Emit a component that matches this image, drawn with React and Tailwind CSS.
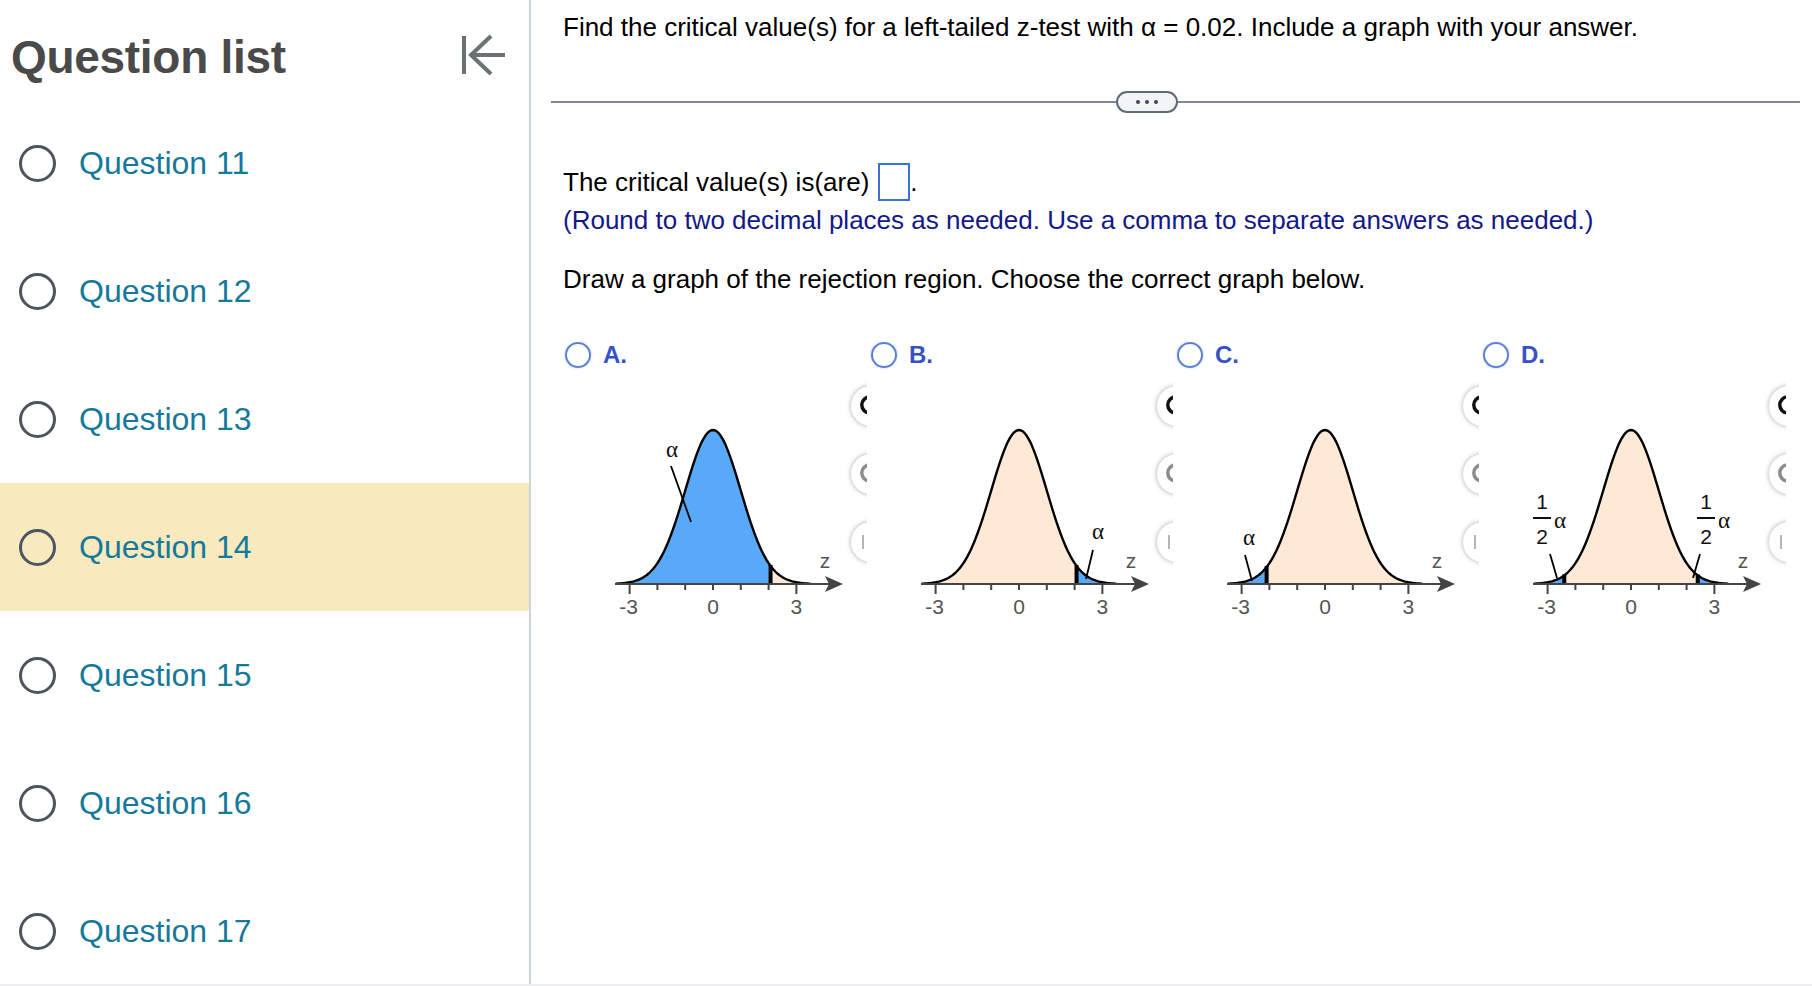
import React from "react";

const BLUE = "#58a9f9";
const PEACH = "#fde9d5";
const CX = 150;
const U = 27.8;
const AY = 206;
const H = 154;
const X = (x) => CX + U * x;
const Y = (x) => AY - H * Math.exp((-x * x) / 2);

function pts(a, b) {
  const out = [];
  const n = Math.max(2, Math.round((b - a) / 0.05));
  for (let i = 0; i <= n; i++) {
    const x = a + ((b - a) * i) / n;
    out.push(`${X(x).toFixed(2)},${Y(x).toFixed(2)}`);
  }
  return out;
}

function area(a, b) {
  return `M${X(a).toFixed(2)},${AY} L${pts(a, b).join(" L")} L${X(b).toFixed(2)},${AY} Z`;
}

function Graph({ regions, crits, labels }) {
  const curve = `M${pts(-3.5, 3.5).join(" L")}`;
  return (
    <svg width="296" height="260" viewBox="0 0 296 260" className="block ml-[2px]">
      {regions.map(([a, b, c], i) => (
        <path key={i} d={area(a, b)} fill={c} />
      ))}
      {crits.map((c, i) => (
        <line key={i} x1={X(c)} y1={AY} x2={X(c)} y2={Y(c) - 1} stroke="#000" strokeWidth="4" />
      ))}
      <path d={curve} fill="none" stroke="#000" strokeWidth="2.4" />
      <line x1="52" y1={AY} x2="266" y2={AY} stroke="#444" strokeWidth="2.2" />
      <path d={`M280,${AY} L262,${AY - 8} L266,${AY} L262,${AY + 8} Z`} fill="#444" />
      {[-3, -2, -1, 0, 1, 2, 3].map((t) => (
        <line
          key={t}
          x1={X(t)}
          y1={AY}
          x2={X(t)}
          y2={AY + (Math.abs(t) === 3 ? 10 : 6)}
          stroke="#444"
          strokeWidth="2"
        />
      ))}
      <g fontFamily="'Liberation Sans', Arial, sans-serif" fontSize="21" fill="#555" textAnchor="middle">
        <text x={X(-3) - 1} y="236">-3</text>
        <text x={X(0)} y="236">0</text>
        <text x={X(3)} y="236">3</text>
        <text x="262" y="190">z</text>
      </g>
      {labels}
    </svg>
  );
}

const alpha = (x, y) => (
  <text x={x} y={y} fontFamily="'Liberation Serif', 'Times New Roman', serif" fontSize="23" textAnchor="middle" fill="#111">
    α
  </text>
);

const half = (x, ax, key) => (
  <g key={key} fontFamily="'Liberation Sans', Arial, sans-serif" fontSize="21" fill="#111">
    <text x={x} y="131" textAnchor="middle">1</text>
    <line x1={x - 9} y1="140" x2={x + 9} y2="140" stroke="#111" strokeWidth="2" />
    <text x={x} y="166" textAnchor="middle">2</text>
    <text x={ax + 1} y="150" textAnchor="middle" fontFamily="'Liberation Serif', serif" fontSize="23">α</text>
  </g>
);

const leader = (x1, y1, x2, y2) => <line x1={x1} y1={y1} x2={x2} y2={y2} stroke="#000" strokeWidth="1.8" />;

const options = [
  {
    key: "A",
    regions: [
      [-3.5, 2.07, BLUE],
      [2.07, 3.5, PEACH],
    ],
    crits: [2.07],
    labels: (
      <g>
        {alpha(109, 79)}
        {leader(108, 88, 128, 144)}
      </g>
    ),
  },
  {
    key: "B",
    regions: [
      [-3.5, 2.07, PEACH],
      [2.07, 3.5, BLUE],
    ],
    crits: [2.07],
    labels: (
      <g>
        {alpha(229, 161)}
        {leader(224, 172, 217, 201)}
      </g>
    ),
  },
  {
    key: "C",
    regions: [
      [-3.5, -2.1, BLUE],
      [-2.1, 3.5, PEACH],
    ],
    crits: [-2.1],
    labels: (
      <g>
        {alpha(74, 167)}
        {leader(70, 177, 77, 203)}
      </g>
    ),
  },
  {
    key: "D",
    regions: [
      [-3.5, -2.4, BLUE],
      [-2.4, 2.4, PEACH],
      [2.4, 3.5, BLUE],
    ],
    crits: [-2.4, 2.4],
    labels: (
      <g>
        {half(61, 78, "l")}
        {half(225, 242, "r")}
        {leader(69, 176, 76, 200)}
        {leader(219, 176, 212, 200)}
      </g>
    ),
  },
];

function ToolButton({ children }) {
  return (
    <div className="w-[40px] h-[40px] rounded-full bg-white shadow-[0_0_5px_rgba(0,0,0,0.35)] flex items-center justify-center">
      {children}
    </div>
  );
}

function Toolbar() {
  return (
    <div className="absolute left-[290px] top-[8px] flex flex-col gap-[28px]">
      <ToolButton>
        <svg width="26" height="26" viewBox="0 0 24 24" fill="none" stroke="#111" strokeWidth="3.2">
          <circle cx="11" cy="11" r="7.5" />
          <path d="M16.5 16.5 22 22" />
        </svg>
      </ToolButton>
      <ToolButton>
        <svg width="26" height="26" viewBox="0 0 24 24" fill="none" stroke="#8c8c8c" strokeWidth="3.2">
          <circle cx="11" cy="11" r="7.5" />
          <path d="M16.5 16.5 22 22" />
        </svg>
      </ToolButton>
      <ToolButton>
        <svg width="24" height="24" viewBox="0 0 24 24" fill="none" stroke="#b5b5b5" strokeWidth="2">
          <path d="M4 5v14" />
        </svg>
      </ToolButton>
    </div>
  );
}

const questions = [11, 12, 13, 14, 15, 16, 17];

export default function App() {
  return (
    <div className="w-[1812px] h-[986px] flex flex-col overflow-hidden bg-white font-['Liberation_Sans',Arial,sans-serif]">
      <div className="flex flex-1 min-h-0">
        {/* Sidebar */}
        <aside className="w-[531px] shrink-0 border-r-2 border-[#cfd3dd] overflow-hidden">
          <div className="h-[99px] flex items-start justify-between pl-[11px] pr-[22px]">
            <h1 className="mt-[34px] text-[46px] leading-none font-bold text-[#4a4a4a] tracking-[-0.3px]">
              Question list
            </h1>
            <svg className="mt-[34px]" width="46" height="42" viewBox="0 0 46 42" fill="none" stroke="#6b7273" strokeWidth="4">
              <path d="M3 2v38" />
              <path d="M30 2 10 21l20 19" strokeLinejoin="miter" />
              <path d="M10 21h34" />
            </svg>
          </div>
          {questions.map((q) => (
            <div
              key={q}
              className={`h-[128px] flex items-center pl-[19px] gap-[23px] ${q === 14 ? "bg-[#f8e9be]" : ""}`}
            >
              <span className="w-[37px] h-[37px] rounded-full border-[3px] border-[#4d5660] shrink-0" />
              <span className="text-[32px] text-[#15799b] leading-none">Question {q}</span>
            </div>
          ))}
        </aside>

        {/* Main */}
        <main className="flex-1 min-w-0 pl-[32px] pr-[12px] pt-[12px] text-[#111]">
          <p className="text-[26px] leading-[30px] text-black">
            Find the critical value(s) for a left-tailed z-test with α = 0.02. Include a graph with your answer.
          </p>

          <div className="mt-[49px] -ml-[12px] h-[22px] flex items-center">
            <div className="w-[565px] h-[2px] bg-[#7f8898]" />
            <div className="w-[62px] h-[22px] rounded-full border-2 border-[#5f6a79] bg-[#f3f4f6] flex items-center justify-center gap-[5px]">
              <span className="w-[4px] h-[4px] rounded-full bg-[#3f4754]" />
              <span className="w-[4px] h-[4px] rounded-full bg-[#3f4754]" />
              <span className="w-[4px] h-[4px] rounded-full bg-[#3f4754]" />
            </div>
            <div className="flex-1 h-[2px] bg-[#7f8898]" />
          </div>

          <div className="mt-[50px] h-[38px] flex items-center text-[26px] text-black">
            <span>The critical value(s) is(are)</span>
            <span className="ml-[9px] w-[32px] h-[38px] border-2 border-[#3b70d6] inline-block" />
            <span>.</span>
          </div>
          <p className="mt-[4px] text-[26px] leading-[30px] text-[#12188a]">
            (Round to two decimal places as needed. Use a comma to separate answers as needed.)
          </p>
          <p className="mt-[29px] text-[26px] leading-[30px] text-black">
            Draw a graph of the rejection region. Choose the correct graph below.
          </p>

          <div className="mt-[48px] w-[1223px] flex overflow-hidden">
            {options.map((o) => (
              <div key={o.key} className="w-[306px] shrink-0 pl-[2px]">
                <div className="h-[26px] flex items-center gap-[12px]">
                  <span className="w-[26px] h-[26px] rounded-full border-2 border-[#5b80da] shadow-[0_0_2px_rgba(90,128,218,0.5)] shrink-0" />
                  <span className="text-[24px] font-bold text-[#3553c6] leading-none">{o.key}.</span>
                </div>
                <div className="relative mt-[10px] -ml-[4px] w-[300px] h-[260px] bg-white">
                  <Graph regions={o.regions} crits={o.crits} labels={o.labels} />
                  <Toolbar />
                </div>
              </div>
            ))}
          </div>
        </main>
      </div>
      <div className="h-[2px] bg-[#eceef2]" />
    </div>
  );
}
